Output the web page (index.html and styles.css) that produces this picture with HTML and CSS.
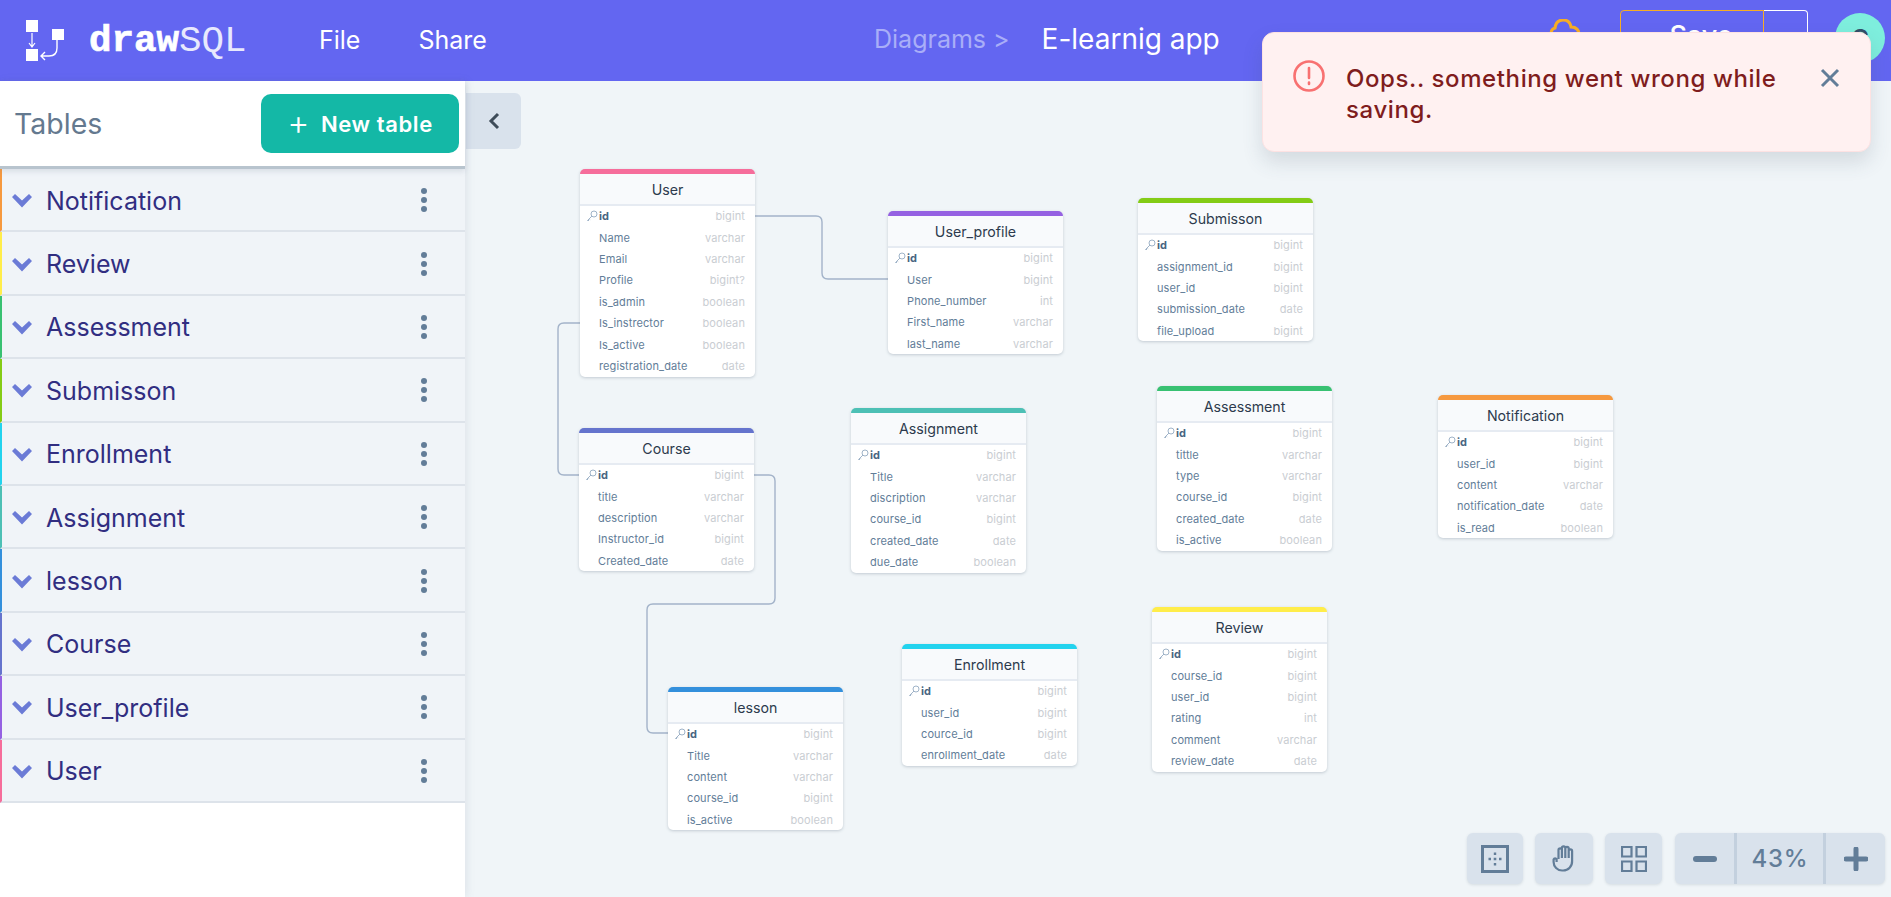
FILE: index.html
```html
<!DOCTYPE html>
<html>
	<head>
		<meta charset="utf-8">
		<title>drawSQL</title>
		<link rel="stylesheet" href="styles.css">
	</head>
	<body>
		<svg class="defs" width="0" height="0">
			<symbol id="key" viewBox="0 0 12 12">
				<circle cx="8" cy="4" r="3" fill="none" stroke="currentColor"/>
				<path d="M6 6 L1.5 10.5 M1.5 10.5 L3 10.5 M3 8.5 L4.2 9.6" fill="none" stroke="currentColor"/>
			</symbol>
			<symbol id="chev" viewBox="0 0 20 14">
				<path d="M0 3 L3 0 L10 6.5 L17 0 L20 3 L10 13.5 Z" fill="currentColor"/>
			</symbol>
			<symbol id="dots" viewBox="0 0 8 26">
				<circle cx="4" cy="4" r="3" fill="currentColor"/>
				<circle cx="4" cy="13" r="3" fill="currentColor"/>
				<circle cx="4" cy="22" r="3" fill="currentColor"/>
			</symbol>
		</svg>

		<header class="topbar">
			<a class="logo">
				<svg class="logo-mark" width="40" height="42" viewBox="0 0 40 42">
					<rect x="0" y="0" width="12" height="12" fill="#fff"/>
					<rect x="0" y="29" width="12" height="12" fill="#fff"/>
					<path d="M26 9 h12 v11 h-12 z" fill="#fff"/>
					<path d="M6 13 V26 M3 23 L6 27 L9 23" fill="none" stroke="#fff" stroke-width="1.2"/>
					<path d="M31 20 V28 Q31 36 23 36 H15 M19 32 L15 36 L19 40" fill="none" stroke="#fff" stroke-width="1.4"/>
				</svg>
				<span class="logo-text"><b>draw</b>SQL</span>
			</a>
			<nav class="menu">
				<span>File</span>
				<span>Share</span>
			</nav>
			<div class="crumbs"><span class="crumb-dim">Diagrams &gt;</span><span class="crumb-name">E-learnig app</span></div>
			<div class="actions">
				<svg class="cloud" width="34" height="30" viewBox="0 0 34 30">
					<path d="M8 24 Q1 23 3 15 Q3 10 7 9 Q8 1 15 1 Q22 1 23 8 Q31 8 31 16 Q31 23 25 24 Z" fill="none" stroke="#f6ad25" stroke-width="3"/>
				</svg>
				<div class="save">
					<span class="save-main"><i class="save-dot"></i>Save</span>
					<span class="save-more"></span>
				</div>
				<div class="avatar">C</div>
			</div>
		</header>

		<main class="workspace">
			<aside class="sidebar">
				<div class="side-head">
					<h2>Tables</h2>
					<button class="new-table"><span class="plus">+</span>New table</button>
				</div>
				<div class="side-row c-orange"><svg class="chev"><use href="#chev"/></svg><span>Notification</span><svg class="kebab"><use href="#dots"/></svg></div>
				<div class="side-row c-yellow"><svg class="chev"><use href="#chev"/></svg><span>Review</span><svg class="kebab"><use href="#dots"/></svg></div>
				<div class="side-row c-green"><svg class="chev"><use href="#chev"/></svg><span>Assessment</span><svg class="kebab"><use href="#dots"/></svg></div>
				<div class="side-row c-lime"><svg class="chev"><use href="#chev"/></svg><span>Submisson</span><svg class="kebab"><use href="#dots"/></svg></div>
				<div class="side-row c-cyan"><svg class="chev"><use href="#chev"/></svg><span>Enrollment</span><svg class="kebab"><use href="#dots"/></svg></div>
				<div class="side-row c-teal"><svg class="chev"><use href="#chev"/></svg><span>Assignment</span><svg class="kebab"><use href="#dots"/></svg></div>
				<div class="side-row c-blue"><svg class="chev"><use href="#chev"/></svg><span>lesson</span><svg class="kebab"><use href="#dots"/></svg></div>
				<div class="side-row c-indigo"><svg class="chev"><use href="#chev"/></svg><span>Course</span><svg class="kebab"><use href="#dots"/></svg></div>
				<div class="side-row c-purple"><svg class="chev"><use href="#chev"/></svg><span>User_profile</span><svg class="kebab"><use href="#dots"/></svg></div>
				<div class="side-row c-pink"><svg class="chev"><use href="#chev"/></svg><span>User</span><svg class="kebab"><use href="#dots"/></svg></div>
			</aside>

			<section class="canvas">
				<button class="collapse">
					<svg width="14" height="20" viewBox="0 0 14 20"><path d="M11 3 L4 10 L11 17" fill="none" stroke="#3e4c59" stroke-width="3"/></svg>
				</button>

				<svg class="links" width="1426" height="816">
					<path d="M289 135 H351 q6 0 6 6 V192 q0 6 6 6 H423"/>
					<path d="M115 242 H99 q-6 0 -6 6 V388 q0 6 6 6 H114"/>
					<path d="M288 394 H304 q6 0 6 6 V517 q0 6 -6 6 H188 q-6 0 -6 6 V646 q0 6 6 6 H203"/>
				</svg>

				<div class="tbl at-user c-pink">
					<h4>User</h4>
					<div class="col pk"><svg><use href="#key"/></svg><b>id</b><span>bigint</span></div>
					<div class="col"><em>Name</em><span>varchar</span></div>
					<div class="col"><em>Email</em><span>varchar</span></div>
					<div class="col"><em>Profile</em><span>bigint?</span></div>
					<div class="col"><em>is_admin</em><span>boolean</span></div>
					<div class="col"><em>Is_instrector</em><span>boolean</span></div>
					<div class="col"><em>Is_active</em><span>boolean</span></div>
					<div class="col"><em>registration_date</em><span>date</span></div>
				</div>

				<div class="tbl at-profile c-purple">
					<h4>User_profile</h4>
					<div class="col pk"><svg><use href="#key"/></svg><b>id</b><span>bigint</span></div>
					<div class="col"><em>User</em><span>bigint</span></div>
					<div class="col"><em>Phone_number</em><span>int</span></div>
					<div class="col"><em>First_name</em><span>varchar</span></div>
					<div class="col"><em>last_name</em><span>varchar</span></div>
				</div>

				<div class="tbl at-submisson c-lime">
					<h4>Submisson</h4>
					<div class="col pk"><svg><use href="#key"/></svg><b>id</b><span>bigint</span></div>
					<div class="col"><em>assignment_id</em><span>bigint</span></div>
					<div class="col"><em>user_id</em><span>bigint</span></div>
					<div class="col"><em>submission_date</em><span>date</span></div>
					<div class="col"><em>file_upload</em><span>bigint</span></div>
				</div>

				<div class="tbl at-course c-indigo">
					<h4>Course</h4>
					<div class="col pk"><svg><use href="#key"/></svg><b>id</b><span>bigint</span></div>
					<div class="col"><em>title</em><span>varchar</span></div>
					<div class="col"><em>description</em><span>varchar</span></div>
					<div class="col"><em>Instructor_id</em><span>bigint</span></div>
					<div class="col"><em>Created_date</em><span>date</span></div>
				</div>

				<div class="tbl at-assignment c-teal">
					<h4>Assignment</h4>
					<div class="col pk"><svg><use href="#key"/></svg><b>id</b><span>bigint</span></div>
					<div class="col"><em>Title</em><span>varchar</span></div>
					<div class="col"><em>discription</em><span>varchar</span></div>
					<div class="col"><em>course_id</em><span>bigint</span></div>
					<div class="col"><em>created_date</em><span>date</span></div>
					<div class="col"><em>due_date</em><span>boolean</span></div>
				</div>

				<div class="tbl at-assessment c-green">
					<h4>Assessment</h4>
					<div class="col pk"><svg><use href="#key"/></svg><b>id</b><span>bigint</span></div>
					<div class="col"><em>tittle</em><span>varchar</span></div>
					<div class="col"><em>type</em><span>varchar</span></div>
					<div class="col"><em>course_id</em><span>bigint</span></div>
					<div class="col"><em>created_date</em><span>date</span></div>
					<div class="col"><em>is_active</em><span>boolean</span></div>
				</div>

				<div class="tbl at-notification c-orange">
					<h4>Notification</h4>
					<div class="col pk"><svg><use href="#key"/></svg><b>id</b><span>bigint</span></div>
					<div class="col"><em>user_id</em><span>bigint</span></div>
					<div class="col"><em>content</em><span>varchar</span></div>
					<div class="col"><em>notification_date</em><span>date</span></div>
					<div class="col"><em>is_read</em><span>boolean</span></div>
				</div>

				<div class="tbl at-review c-yellow">
					<h4>Review</h4>
					<div class="col pk"><svg><use href="#key"/></svg><b>id</b><span>bigint</span></div>
					<div class="col"><em>course_id</em><span>bigint</span></div>
					<div class="col"><em>user_id</em><span>bigint</span></div>
					<div class="col"><em>rating</em><span>int</span></div>
					<div class="col"><em>comment</em><span>varchar</span></div>
					<div class="col"><em>review_date</em><span>date</span></div>
				</div>

				<div class="tbl at-enrollment c-cyan">
					<h4>Enrollment</h4>
					<div class="col pk"><svg><use href="#key"/></svg><b>id</b><span>bigint</span></div>
					<div class="col"><em>user_id</em><span>bigint</span></div>
					<div class="col"><em>cource_id</em><span>bigint</span></div>
					<div class="col"><em>enrollment_date</em><span>date</span></div>
				</div>

				<div class="tbl at-lesson c-blue">
					<h4>lesson</h4>
					<div class="col pk"><svg><use href="#key"/></svg><b>id</b><span>bigint</span></div>
					<div class="col"><em>Title</em><span>varchar</span></div>
					<div class="col"><em>content</em><span>varchar</span></div>
					<div class="col"><em>course_id</em><span>bigint</span></div>
					<div class="col"><em>is_active</em><span>boolean</span></div>
				</div>

				<div class="tools">
					<button class="tool tool-fit">
						<svg width="28" height="28" viewBox="0 0 28 28">
							<rect x="1.5" y="1.5" width="25" height="25" fill="none" stroke="#627d98" stroke-width="3"/>
							<path d="M14 7.5 v2.5 M14 12.7 v2.6 M14 18 v2.5 M7.5 14 h2.5 M12.7 14 h2.6 M18 14 h2.5" stroke="#627d98" stroke-width="2.4" fill="none"/>
						</svg>
					</button>
					<button class="tool tool-hand">
						<svg width="24" height="27" viewBox="0 0 24 27">
							<path d="M6.5 14 V5 a1.7 1.7 0 0 1 3.4 0 V3 a1.7 1.7 0 0 1 3.4 0 V3.5 a1.7 1.7 0 0 1 3.4 0 V6 a1.7 1.7 0 0 1 3.4 0 V16 a9 9 0 0 1 -9 9.5 h-1 a8.5 8.5 0 0 1 -8.5 -8.5 V14.5 a1.6 1.6 0 0 1 3 0 V17 M9.9 5 V13 M13.3 3 V13 M16.7 4 V13" fill="none" stroke="#627d98" stroke-width="2.2"/>
						</svg>
					</button>
					<button class="tool tool-grid">
						<svg width="26" height="26" viewBox="0 0 26 26">
							<path d="M1 1 h9.5 v9.5 h-9.5 z M15.5 1 h9.5 v9.5 h-9.5 z M1 15.5 h9.5 v9.5 h-9.5 z M15.5 15.5 h9.5 v9.5 h-9.5 z" fill="none" stroke="#627d98" stroke-width="2.2"/>
						</svg>
					</button>
					<div class="zoom">
						<button class="zoom-btn">
							<svg width="24" height="6" viewBox="0 0 24 6"><rect width="24" height="6" rx="3" fill="#627d98"/></svg>
						</button>
						<span class="zoom-val">43%</span>
						<button class="zoom-btn">
							<svg width="24" height="24" viewBox="0 0 24 24"><path d="M12 2 V22 M2 12 H22" stroke="#627d98" stroke-width="5" stroke-linecap="round"/></svg>
						</button>
					</div>
				</div>
			</section>
		</main>

		<div class="toast">
			<svg class="toast-icon" width="34" height="34" viewBox="0 0 34 34">
				<circle cx="17" cy="17" r="14.5" fill="none" stroke="#f87171" stroke-width="2.6"/>
				<path d="M17 9 V19 M17 23.5 V25" stroke="#f87171" stroke-width="2.6" stroke-linecap="round"/>
			</svg>
			<p>Oops.. something went wrong while saving.</p>
			<svg class="toast-close" width="20" height="20" viewBox="0 0 20 20">
				<path d="M2 2 L18 18 M18 2 L2 18" stroke="#627d98" stroke-width="3"/>
			</svg>
		</div>
	</body>
</html>
```
FILE: styles.css
```css
* {
	box-sizing: border-box;
}

html, body {
	margin: 0;
	height: 897px;
	overflow: hidden;
	font-family: Inter, "Noto Sans", sans-serif;
}

button {
	font-family: inherit;
	border: 0;
	padding: 0;
}

.defs {
	position: absolute;
}

/* colour of each table */
.c-pink { --tc: #f66d9b; }
.c-purple { --tc: #9561e2; }
.c-lime { --tc: #84cc16; }
.c-indigo { --tc: #6574cd; }
.c-teal { --tc: #4dc0b5; }
.c-green { --tc: #38c172; }
.c-orange { --tc: #f6993f; }
.c-yellow { --tc: #ffed4a; }
.c-cyan { --tc: #22d3ee; }
.c-blue { --tc: #3490dc; }

/* top bar */
.topbar {
	height: 81px;
	background: #6366f1;
	color: #fff;
	display: flex;
	align-items: center;
	padding-left: 26px;
}

.logo {
	display: flex;
	align-items: center;
	gap: 23px;
	width: 293px;
}

.logo-mark {
	flex: none;
}

.logo-text {
	font-family: "Liberation Mono", monospace;
	font-size: 37.5px;
	color: #e8e9fd;
}

.logo-text b {
	color: #fff;
	-webkit-text-stroke: 0.7px #fff;
}

.menu {
	display: flex;
	gap: 58px;
	font-size: 25px;
	width: 555px;
	padding-bottom: 2px;
}

.crumbs {
	font-size: 25px;
	display: flex;
	align-items: center;
	gap: 32px;
	padding-bottom: 4px;
}

.crumb-dim {
	color: #a9aef8;
	padding-top: 1px;
}

.crumb-name {
	font-size: 28px;
}

.actions {
	margin-left: auto;
	display: flex;
	align-items: flex-start;
	height: 81px;
	padding-right: 6px;
}

.cloud {
	margin-top: 19px;
	margin-right: 38px;
}

.save {
	display: flex;
	margin-top: 10px;
	height: 50px;
	margin-right: 27px;
}

.save-main {
	width: 144px;
	border: 1px solid #f6ad25;
	border-radius: 4px 0 0 4px;
	font-size: 27px;
	font-weight: 500;
	display: flex;
	justify-content: center;
	align-items: center;
	gap: 10px;
}

.save-dot {
	width: 8px;
	height: 8px;
	margin-top: 4px;
	background: #f6ad25;
	border-radius: 4px;
}

.save-more {
	width: 44px;
	border: 1px solid #fff;
	border-left: 0;
	border-radius: 0 4px 4px 0;
}

.avatar {
	width: 50px;
	height: 50px;
	margin-top: 13px;
	border-radius: 50%;
	background: #7eeedd;
	color: #334e68;
	font-size: 24px;
	font-weight: 600;
	display: flex;
	justify-content: center;
	align-items: center;
}

/* main area */
.workspace {
	display: flex;
	height: 816px;
}

.sidebar {
	width: 465px;
	flex: none;
	background: #fff;
	box-shadow: 2px 0 8px rgba(100, 116, 139, 0.12);
	position: relative;
	z-index: 2;
}

.side-head {
	height: 88px;
	padding: 13px 6px 0 14px;
	display: flex;
	justify-content: space-between;
	align-items: flex-start;
	border-bottom: 3px solid #b8c4ce;
	box-shadow: 0 2px 6px rgba(100, 116, 139, 0.2);
	background: #fff;
	position: relative;
}

.side-head h2 {
	margin: 12px 0 0;
	font-size: 28.5px;
	font-weight: 400;
	color: #64798f;
}

.new-table {
	width: 198px;
	height: 59px;
	background: #14b8a6;
	color: #fff;
	border-radius: 10px;
	font-size: 22px;
	font-weight: 600;
	letter-spacing: 0.6px;
}

.plus {
	font-weight: 300;
	font-size: 34px;
	line-height: 20px;
	margin-right: 11px;
	vertical-align: -3px;
}

.side-row {
	height: 63.4px;
	display: flex;
	align-items: center;
	background: #f0f4f8;
	border-left: 2px solid var(--tc);
	border-bottom: 2px solid #dde3ea;
	padding-left: 10px;
	font-size: 25px;
	color: #312e81;
}

.side-row span {
	padding-top: 2px;
}

.chev {
	width: 20px;
	height: 14px;
	margin-top: 3px;
	margin-right: 14px;
	color: #6b7bd6;
}

.kebab {
	width: 8px;
	height: 26px;
	margin-top: 1px;
	margin-left: auto;
	margin-right: 37px;
	color: #627d98;
}

/* diagram canvas */
.canvas {
	flex: 1;
	position: relative;
	background: #f0f5f8;
	overflow: hidden;
}

.collapse {
	position: absolute;
	left: 1px;
	top: 12px;
	width: 55px;
	height: 56px;
	background: #d9e2ec;
	border-radius: 0 6px 6px 0;
	display: flex;
	justify-content: center;
	align-items: center;
}

.links {
	position: absolute;
	left: 0;
	top: 0;
}

.links path {
	fill: none;
	stroke: #a3b3c9;
	stroke-width: 1.4;
}

.tbl {
	position: absolute;
	width: 175px;
	background: #fff;
	border-radius: 5px;
	border-top: 5px solid var(--tc);
	box-shadow: 0 1px 3px rgba(60, 80, 100, 0.25);
	overflow: hidden;
}

.tbl h4 {
	margin: 0;
	height: 31.5px;
	line-height: 31px;
	background: #f8fafc;
	border-bottom: 2px solid #e6ebf2;
	text-align: center;
	font-size: 14.2px;
	font-weight: 400;
	color: #2d3a4d;
}

.col {
	height: 21.4px;
	display: flex;
	align-items: center;
	justify-content: space-between;
	padding: 0 10px 0 19px;
	font-size: 11px;
	letter-spacing: 0.1px;
}

.col em {
	font-style: normal;
	color: #627d98;
}

.col span {
	margin-left: auto;
	color: #c9cdd2;
}

.col b {
	color: #486581;
	font-weight: 700;
}

.col.pk {
	padding-left: 6px;
}

.col.pk svg {
	width: 12px;
	height: 12px;
	margin-right: 1px;
	color: #9fb3c8;
}

.at-user { left: 115px; top: 88px; }
.at-profile { left: 423px; top: 130px; }
.at-submisson { left: 673px; top: 117px; }
.at-course { left: 114px; top: 347px; }
.at-assignment { left: 386px; top: 327px; }
.at-assessment { left: 692px; top: 305px; }
.at-notification { left: 973px; top: 314px; }
.at-review { left: 687px; top: 526px; }
.at-enrollment { left: 437px; top: 563px; }
.at-lesson { left: 203px; top: 606px; }

/* bottom right tools */
.tools {
	position: absolute;
	right: 6px;
	bottom: 13px;
	display: flex;
	gap: 12px;
}

.tool {
	height: 51px;
	background: #d9e2ec;
	border-radius: 6px;
	box-shadow: 0 1px 3px rgba(60, 80, 100, 0.15);
	display: flex;
	justify-content: center;
	align-items: center;
}

.tool-fit { width: 56px; }
.tool-hand { width: 58px; }
.tool-grid { width: 57px; margin-right: 1px; }

.zoom {
	display: flex;
	height: 51px;
	width: 210px;
	background: #d9e2ec;
	border-radius: 6px;
	box-shadow: 0 1px 3px rgba(60, 80, 100, 0.15);
}

.zoom-btn {
	width: 59px;
	background: none;
	display: flex;
	justify-content: center;
	align-items: center;
}

.zoom-val {
	flex: 1;
	border: solid #c3d0de;
	border-width: 0 3px;
	display: flex;
	justify-content: center;
	align-items: center;
	font-size: 24px;
	font-weight: 500;
	letter-spacing: 0.8px;
	color: #627d98;
}

/* error message */
.toast {
	position: absolute;
	left: 1262px;
	top: 32px;
	width: 609px;
	height: 120px;
	z-index: 5;
	background: #fff1f1;
	border: 1px solid #fde2e2;
	border-radius: 12px;
	box-shadow: 0 10px 20px rgba(60, 80, 100, 0.16);
	display: flex;
	align-items: flex-start;
	padding: 26px 30px 0 29px;
	color: #7f1d1d;
}

.toast-icon {
	flex: none;
	margin-right: 20px;
}

.toast p {
	margin: 4px 0 0;
	font-size: 24px;
	font-weight: 500;
	line-height: 31px;
	letter-spacing: 0.6px;
	width: 450px;
}

.toast-close {
	margin-left: auto;
	margin-top: 9px;
}
```
